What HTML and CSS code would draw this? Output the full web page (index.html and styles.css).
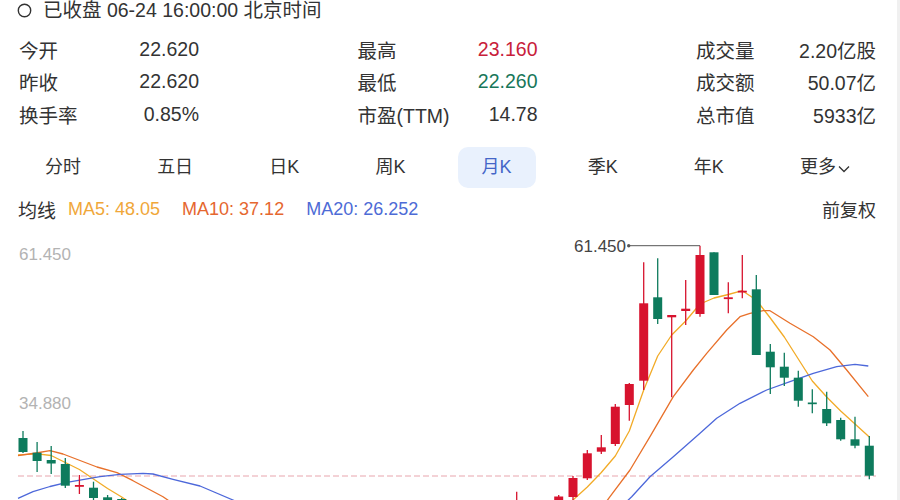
FILE: index.html
```html
<!DOCTYPE html>
<html lang="zh-CN">
<head>
<meta charset="utf-8">
<title>行情</title>
<link rel="stylesheet" href="styles.css">
</head>
<body>
<div class="page">
  <div class="status">
    <svg class="status-icon" width="15" height="15" viewBox="0 0 15 15"><circle cx="7.5" cy="7.5" r="6.2" fill="none" stroke="#333" stroke-width="1.4"/></svg>
    <span>已收盘 06-24 16:00:00 北京时间</span>
  </div>

  <div class="stats">
    <div class="stat"><span class="stat-label">今开</span><span class="stat-value">22.620</span></div>
    <div class="stat"><span class="stat-label">最高</span><span class="stat-value val-up">23.160</span></div>
    <div class="stat"><span class="stat-label">成交量</span><span class="stat-value">2.20亿股</span></div>
    <div class="stat"><span class="stat-label">昨收</span><span class="stat-value">22.620</span></div>
    <div class="stat"><span class="stat-label">最低</span><span class="stat-value val-down">22.260</span></div>
    <div class="stat"><span class="stat-label">成交额</span><span class="stat-value">50.07亿</span></div>
    <div class="stat"><span class="stat-label">换手率</span><span class="stat-value">0.85%</span></div>
    <div class="stat"><span class="stat-label">市盈(TTM)</span><span class="stat-value">14.78</span></div>
    <div class="stat"><span class="stat-label">总市值</span><span class="stat-value">5933亿</span></div>
  </div>

  <div class="tabs">
    <div class="tab">分时</div>
    <div class="tab">五日</div>
    <div class="tab">日K</div>
    <div class="tab">周K</div>
    <div class="tab tab-active">月K</div>
    <div class="tab">季K</div>
    <div class="tab">年K</div>
    <div class="tab tab-more">更多<svg class="more-arrow" width="12" height="8" viewBox="0 0 12 8"><path d="M1 1.5 L6 6.5 L11 1.5" fill="none" stroke="#333" stroke-width="1.3"/></svg></div>
  </div>

  <div class="ma-row">
    <span class="ma-title">均线</span>
    <span class="ma ma5">MA5: 48.05</span>
    <span class="ma ma10">MA10: 37.12</span>
    <span class="ma ma20">MA20: 26.252</span>
    <span class="adjust">前复权</span>
  </div>

  <div class="chart">
    <svg viewBox="0 224 897 276" width="897" height="276">
      <!-- price axis -->
      <text class="axis-label" x="19" y="260">61.450</text>
      <text class="axis-label" x="19" y="409">34.880</text>

      <!-- last close -->
      <line class="close-line" x1="18" y1="476" x2="876" y2="476"/>

      <!-- moving averages -->
      <polyline class="line-ma5" points="18,455 23,454.6 37.1,453.8 51.2,455.5 65.3,462.5 79.4,469.5 93.5,479 107.6,488.5 121.7,497 135,506 300,560 560,560 566,506 573,500 587.3,487 601.3,472.5 615.3,456 629.3,431 643.7,390 657.7,356 671.7,335 685.7,321 700,304 714,298 728.3,294.5 742.3,290.7 756.3,300 770.3,318 784.3,337 798.3,359 812.3,381 826.7,397 840.7,411 855,424 869.3,437"/>
      <polyline class="line-ma10" points="18,455.7 36,453 50,450.7 63,454 80,460.5 97,467 117,472.7 133,480.7 163,496.7 175,505 300,560 590,560 603,506 610,496.7 630,470 650,436.7 673.3,396.7 693.3,370 706.7,353.3 726.7,330 740,316.7 750,313.3 763.3,310.7 770,310.7 790,323.3 813.3,336.7 830,350 846.7,370 868.3,396.7"/>
      <polyline class="line-ma20" points="18,498.3 33,491.7 50,486.5 67,482.3 100,476.7 120,474.3 143,473.3 153,474 173,479.3 200,486 233,500 245,506 400,560 610,560 622,506 631.7,496.7 650,476.7 673.3,456.7 700,433.3 716.7,418.3 740,403.3 766.7,390 790,381.7 813.3,373.3 836.7,366.7 855,364.3 868.3,366"/>

      <!-- falling months -->
      <g class="fall">
        <line x1="23" y1="431" x2="23" y2="453"/><rect x="18.5" y="438" width="9" height="14"/>
        <line x1="37.1" y1="442" x2="37.1" y2="472"/><rect x="32.6" y="452.7" width="9" height="8.3"/>
        <line x1="51.2" y1="446" x2="51.2" y2="474"/><rect x="46.7" y="460" width="9" height="3.5"/>
        <line x1="65.3" y1="458" x2="65.3" y2="488"/><rect x="60.8" y="464" width="9" height="21.7"/>
        <line x1="93.5" y1="481.7" x2="93.5" y2="506"/><rect x="89" y="487.7" width="9" height="10.3"/>
        <line x1="107.6" y1="495" x2="107.6" y2="512"/><rect x="103.1" y="497.3" width="9" height="10.7"/>
        <line x1="121.7" y1="498" x2="121.7" y2="512"/><rect x="117.2" y="499" width="9" height="9"/>
        <line x1="657.7" y1="258.3" x2="657.7" y2="324"/><rect x="653.2" y="297.3" width="9" height="21.7"/>
        <line x1="714" y1="252.3" x2="714" y2="295"/><rect x="709.5" y="252.3" width="9" height="42.7"/>
        <line x1="756.3" y1="275" x2="756.3" y2="355"/><rect x="751.8" y="289.3" width="9" height="65.7"/>
        <line x1="770.3" y1="344" x2="770.3" y2="394"/><rect x="765.8" y="351.7" width="9" height="15.6"/>
        <line x1="784.3" y1="352.7" x2="784.3" y2="386"/><rect x="779.8" y="366.7" width="9" height="11"/>
        <line x1="798.3" y1="370.7" x2="798.3" y2="406.7"/><rect x="793.8" y="377.7" width="9" height="23"/>
        <line x1="812.3" y1="389.3" x2="812.3" y2="413.3"/><rect x="807.8" y="402.5" width="9" height="1.7"/>
        <line x1="826.7" y1="391.7" x2="826.7" y2="426"/><rect x="822.2" y="409" width="9" height="14.3"/>
        <line x1="840.7" y1="417.7" x2="840.7" y2="440.7"/><rect x="836.2" y="420" width="9" height="19.3"/>
        <line x1="855" y1="416.7" x2="855" y2="448.3"/><rect x="850.5" y="439.3" width="9" height="6.4"/>
        <line x1="869.3" y1="436" x2="869.3" y2="479.3"/><rect x="864.8" y="445.7" width="9" height="30"/>
      </g>

      <!-- rising months -->
      <g class="rise">
        <line x1="79.4" y1="475" x2="79.4" y2="494"/><rect x="74.9" y="485" width="9" height="1.8"/>
        <line x1="516.7" y1="491.7" x2="516.7" y2="520"/><rect x="512.2" y="505" width="9" height="10"/>
        <line x1="558.7" y1="495" x2="558.7" y2="506"/><rect x="554.2" y="496.5" width="9" height="7.5"/>
        <line x1="573" y1="476" x2="573" y2="502"/><rect x="568.5" y="478" width="9" height="19"/>
        <line x1="587.3" y1="450" x2="587.3" y2="480"/><rect x="582.8" y="453.3" width="9" height="25"/>
        <line x1="601.3" y1="435" x2="601.3" y2="454"/><rect x="596.8" y="447.3" width="9" height="4.4"/>
        <line x1="615.3" y1="404" x2="615.3" y2="446"/><rect x="610.8" y="406.7" width="9" height="37.3"/>
        <line x1="629.3" y1="383" x2="629.3" y2="420.7"/><rect x="624.8" y="384" width="9" height="21"/>
        <line x1="643.7" y1="262.3" x2="643.7" y2="390"/><rect x="639.2" y="303.3" width="9" height="77.4"/>
        <line x1="671.7" y1="315" x2="671.7" y2="397.3"/><rect x="667.2" y="315" width="9" height="2.3"/>
        <line x1="685.7" y1="280" x2="685.7" y2="325"/><rect x="681.2" y="308.7" width="9" height="2.3"/>
        <line x1="700" y1="245.7" x2="700" y2="316.7"/><rect x="695.5" y="255" width="9" height="59"/>
        <line x1="728.3" y1="282.3" x2="728.3" y2="313.3"/><rect x="723.8" y="297.3" width="9" height="1.8"/>
        <line x1="742.3" y1="255" x2="742.3" y2="298.3"/><rect x="737.8" y="290.7" width="9" height="1.8"/>
      </g>

      <!-- period high marker -->
      <line class="peak-line" x1="628.7" y1="245.7" x2="700" y2="245.7"/>
      <circle class="peak-dot" cx="628.7" cy="245.7" r="1.7"/>
      <text class="peak-label" x="626" y="251.5" text-anchor="end">61.450</text>
    </svg>
  </div>
</div>
</body>
</html>
```

FILE: styles.css
```css
* {
  box-sizing: border-box;
}

html,
body {
  margin: 0;
  background: #fff;
}

body {
  font-family: "Liberation Sans", "Noto Sans CJK SC", sans-serif;
  color: #333;
}

.page {
  width: 900px;
  height: 500px;
  overflow: hidden;
  border-right: 3px solid #f0f0f0;
}

/* market status line */
.status {
  display: flex;
  align-items: center;
  height: 21px;
  padding-left: 17px;
  font-size: 19.5px;
  line-height: 21px;
}

.status-icon {
  flex: none;
  margin-right: 11px;
}

/* quote summary */
.stats {
  display: grid;
  grid-template-columns: repeat(3, 180px);
  grid-auto-rows: 32.5px;
  justify-content: space-between;
  margin-top: 12px;
  padding: 0 21px 0 19px;
  font-size: 19.5px;
}

.stat {
  display: flex;
  justify-content: space-between;
  align-items: center;
  white-space: nowrap;
}

.val-up {
  color: #c8203a;
}

.val-down {
  color: #18775a;
}

/* period tabs */
.tabs {
  display: flex;
  justify-content: space-between;
  margin-top: 16.5px;
  padding: 0 21px;
  font-size: 18px;
}

.tab {
  height: 41px;
  line-height: 41px;
  padding: 0 24px;
  border-radius: 10px;
  white-space: nowrap;
}

.tab-active {
  background: #e9f1fd;
  color: #4466c8;
}

.tab-more {
  display: flex;
  align-items: center;
  padding-right: 26px;
}

.more-arrow {
  margin-left: 2px;
  margin-top: 2px;
}

/* moving average legend */
.ma-row {
  display: flex;
  align-items: center;
  height: 30px;
  margin-top: 6px;
  padding: 0 21px 0 18px;
  font-size: 18px;
  white-space: nowrap;
}

.ma-title {
  font-size: 19px;
  margin-right: 12px;
}

.ma + .ma {
  margin-left: 22px;
}

.ma5 {
  color: #f0a73a;
}

.ma10 {
  color: #e5672f;
}

.ma20 {
  color: #4d6bd6;
}

.adjust {
  margin-left: auto;
}

/* candlestick chart */
.chart svg {
  display: block;
}

.axis-label {
  font-size: 17px;
  fill: #b3b3b3;
}

.close-line {
  stroke: #e8a5ad;
  stroke-width: 1;
  stroke-dasharray: 6 3;
}

.line-ma5,
.line-ma10,
.line-ma20 {
  fill: none;
  stroke-width: 1.3;
  stroke-linejoin: round;
}

.line-ma5 {
  stroke: #f2ab27;
}

.line-ma10 {
  stroke: #e8702a;
}

.line-ma20 {
  stroke: #4d68da;
}

.rise rect {
  fill: #d7132e;
}

.rise line {
  stroke: #d7132e;
  stroke-width: 1.3;
}

.fall rect {
  fill: #0e7b5d;
}

.fall line {
  stroke: #0e7b5d;
  stroke-width: 1.3;
}

.peak-line {
  stroke: #555;
  stroke-width: 1;
}

.peak-dot {
  fill: #555;
}

.peak-label {
  font-size: 17px;
  fill: #444;
}
```
